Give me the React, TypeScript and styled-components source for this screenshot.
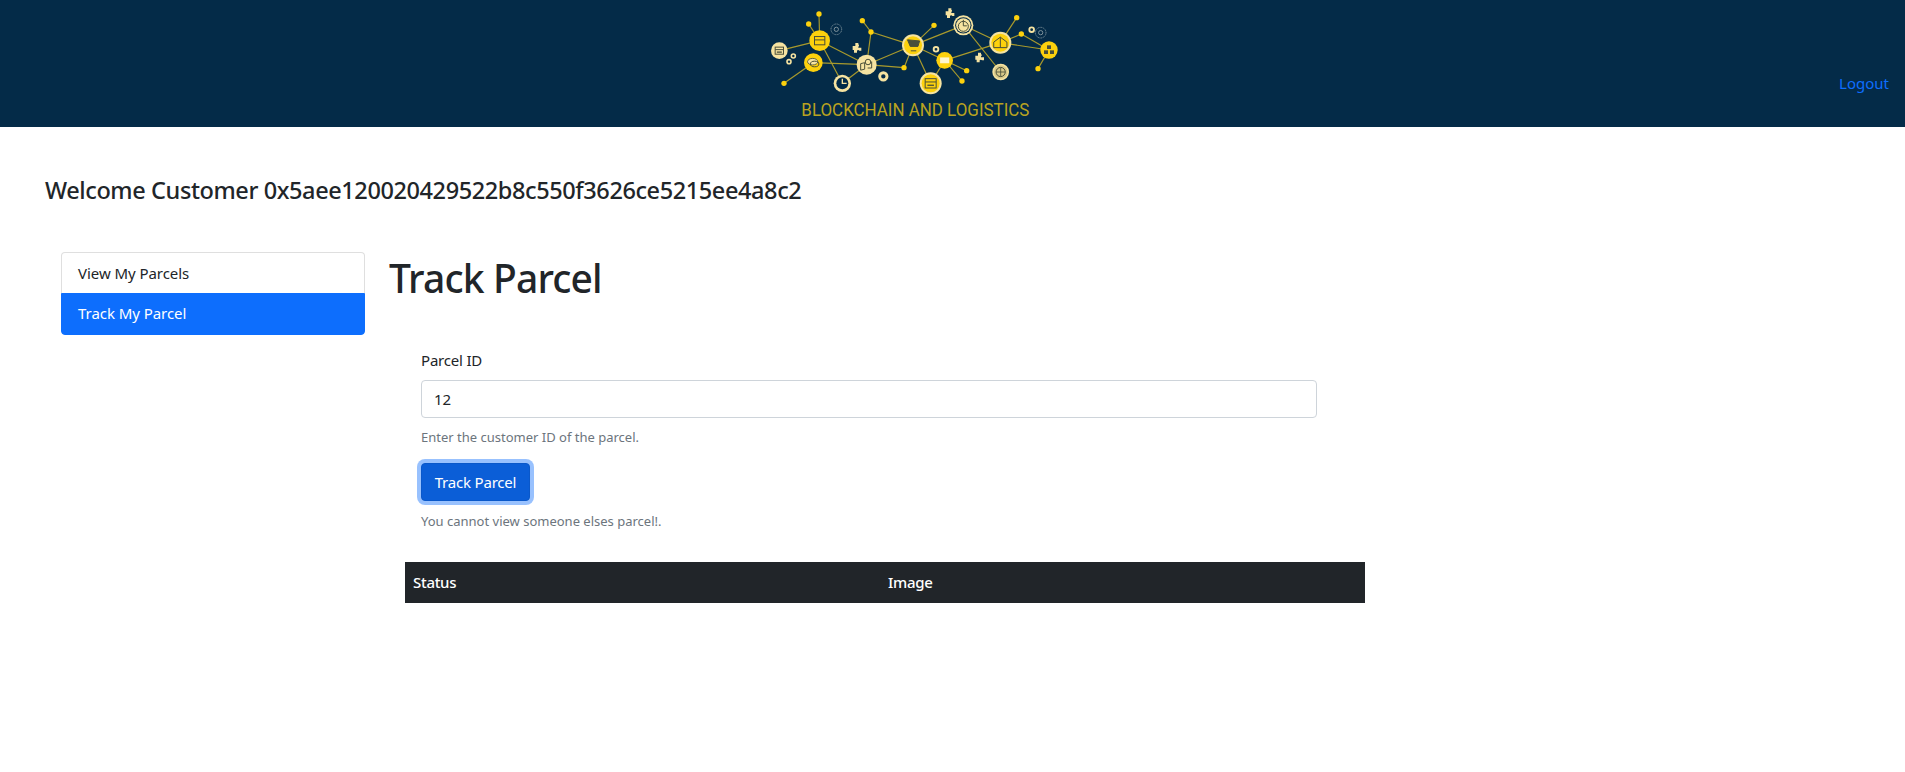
import React from "react";
import styled, { createGlobalStyle } from "styled-components";

const FONT = `"Noto Sans", "Open Sans", "Liberation Sans", sans-serif`;
const YELLOW = "#fdd10c";
const CREAM = "#f6e3a1";
const INK = "#4a4f3a";

const GlobalStyle = createGlobalStyle`
  html, body {
    margin: 0;
    padding: 0;
    background: #fff;
    color: #212529;
    font-family: ${FONT};
    font-size: 16px;
  }
  * { box-sizing: border-box; }
`;

const Header = styled.header`
  height: 127px;
  background: #042b48;
  display: flex;
  align-items: flex-end;
`;
const LogoWrap = styled.div`
  flex: 1;
  height: 127px;
  display: flex;
  justify-content: center;
  padding-right: 13px;
`;
const LogoutLink = styled.a`
  color: #0d6efd;
  font-size: 15px;
  line-height: 24px;
  padding: 8px 16px 32px 8px;
  text-decoration: none;
`;
const Welcome = styled.h4`
  margin: 0;
  padding: 46px 0 0 45px;
  height: 125px;
  font-size: 23.5px;
  line-height: 34px;
  font-weight: 500;
  letter-spacing: -0.4px;
`;
const Columns = styled.div`
  display: flex;
  align-items: flex-start;
  gap: 24px;
  padding-left: 61px;
`;
const SideList = styled.div`
  width: 304px;
  display: flex;
  flex-direction: column;
`;
const SideItem = styled.a<{ $active?: boolean }>`
  height: ${(p) => (p.$active ? "42px" : "41px")};
  padding-left: 16px;
  font-size: 15px;
  letter-spacing: -0.05px;
  line-height: ${(p) => (p.$active ? "38px" : "41px")};
  color: ${(p) => (p.$active ? "#fff" : "#212529")};
  background: ${(p) => (p.$active ? "#0d6efd" : "#fff")};
  border: 1px solid ${(p) => (p.$active ? "#0d6efd" : "#dfdfdf")};
  border-bottom: ${(p) => (p.$active ? "1px solid #0d6efd" : "0")};
  border-radius: ${(p) => (p.$active ? "0 0 4px 4px" : "4px 4px 0 0")};
`;
const MainCol = styled.main`
  width: 976px;
`;
const Title = styled.h1`
  margin: 0;
  height: 96px;
  font-size: 39px;
  line-height: 52px;
  font-weight: 500;
  letter-spacing: -0.85px;
`;
const Form = styled.form`
  margin-left: 32px;
  width: 896px;
  display: flex;
  flex-direction: column;
  align-items: flex-start;
`;
const Label = styled.label`
  font-size: 15px;
  line-height: 24px;
  letter-spacing: -0.2px;
  margin-bottom: 8px;
`;
const Input = styled.input`
  width: 100%;
  height: 38px;
  border: 1px solid #ced4da;
  border-radius: 4px;
  padding: 0 12px;
  font-family: ${FONT};
  font-size: 15px;
  color: #212529;
  outline: none;
`;
const Hint = styled.small<{ $gap: number }>`
  color: #6c757d;
  font-size: 13px;
  line-height: 21px;
  margin-top: ${(p) => p.$gap}px;
`;
const Button = styled.button`
  width: 109px;
  height: 38px;
  margin-top: 15px;
  border: 1px solid #0a58ca;
  border-radius: 4px;
  background: #0b5ed7;
  color: #fff;
  font-family: ${FONT};
  font-size: 15px;
  letter-spacing: -0.2px;
  padding: 0;
  box-shadow: 0 0 0 4px rgba(49, 132, 253, 0.5);
`;
const Table = styled.table`
  width: 960px;
  margin: 30px 0 0 16px;
  border-collapse: collapse;
  table-layout: fixed;
`;
const HeadCell = styled.th<{ $width?: number }>`
  height: 41px;
  width: ${(p) => (p.$width ? `${p.$width}px` : "auto")};
  padding: 0 8px 2px;
  background: #212529;
  color: #fff;
  text-align: left;
  font-size: 15px;
  font-weight: 500;
  letter-spacing: -0.3px;
`;

const dots = [
  [240, 42], [209, 72], [135, 250], [370, 62], [396, 96], [495, 203], [585, 76],
  [683, 212], [669, 243], [833, 53], [847, 102], [897, 206],
];
const edges = [
  [121, 152, 242, 122], [240, 42, 242, 122], [209, 72, 242, 122], [242, 122, 383, 194], [242, 122, 310, 250],
  [135, 250, 223, 188], [223, 188, 383, 194], [310, 250, 383, 194], [383, 194, 495, 203], [383, 194, 396, 96],
  [370, 62, 396, 96], [396, 96, 522, 136], [383, 194, 522, 136], [495, 203, 522, 136], [522, 136, 585, 76],
  [522, 136, 673, 76], [522, 136, 575, 250], [522, 136, 617, 181], [617, 181, 575, 250], [617, 181, 683, 212],
  [617, 181, 669, 243], [617, 181, 784, 128], [673, 76, 784, 128], [673, 76, 785, 216], [784, 128, 833, 53],
  [784, 128, 847, 102], [847, 102, 930, 150], [784, 128, 930, 150], [930, 150, 897, 206],
];

type Hub = { x: number; y: number; r: number; ring: string; core: string; icon: string };
const hubs: Hub[] = [
  { x: 121, y: 152, r: 25, ring: CREAM, core: CREAM, icon: "monitor" },
  { x: 242, y: 122, r: 31, ring: YELLOW, core: YELLOW, icon: "box" },
  { x: 223, y: 188, r: 28, ring: YELLOW, core: YELLOW, icon: "chat" },
  { x: 383, y: 194, r: 30, ring: CREAM, core: CREAM, icon: "map" },
  { x: 522, y: 136, r: 33, ring: CREAM, core: YELLOW, icon: "cart" },
  { x: 673, y: 76, r: 30, ring: CREAM, core: "#042b48", icon: "clock" },
  { x: 617, y: 181, r: 25, ring: YELLOW, core: YELLOW, icon: "mail" },
  { x: 575, y: 250, r: 33, ring: CREAM, core: YELLOW, icon: "calendar" },
  { x: 784, y: 128, r: 33, ring: CREAM, core: YELLOW, icon: "store" },
  { x: 930, y: 150, r: 26, ring: YELLOW, core: YELLOW, icon: "cubes" },
  { x: 785, y: 216, r: 25, ring: CREAM, core: "#d8c98a", icon: "globe" },
];
const rings = [[292, 88, 16], [905, 98, 16]];
const gears = [[163, 168, 6], [150, 185, 6], [433, 229, 11], [591, 148, 7], [878, 89, 7]];
const puzzles = [[354, 141], [633, 37], [722, 170]];

function HubIcon({ hub }: { hub: Hub }) {
  const { x, y, r, icon } = hub;
  const s = r * 0.5;
  const line = { fill: "none", stroke: INK, strokeWidth: 3 };
  switch (icon) {
    case "mail":
      return <rect x={x - s * 1.1} y={y - s * 0.7} width={s * 2.2} height={s * 1.4} fill="#fff6cf" />;
    case "clock":
      return (
        <g>
          <circle cx={x} cy={y} r={r * 0.72} fill={CREAM} />
          <circle cx={x} cy={y + 3} r={s} {...line} />
          <path d={`M${x} ${y - s * 1.1}v${s * 1.2}h${s * 0.7}`} {...line} />
        </g>
      );
    case "chat":
      return (
        <g>
          <ellipse cx={x - 2} cy={y - 3} rx={s * 1.1} ry={s * 0.7} fill={CREAM} stroke={INK} strokeWidth={2.5} />
          <ellipse cx={x + 4} cy={y + 4} rx={s * 0.9} ry={s * 0.6} {...line} />
        </g>
      );
    case "map":
      return (
        <g>
          <path d={`M${x - s * 1.2} ${y - 3}l${s * 0.8} -3v${s * 1.3}l-${s * 0.8} 3zM${x + 3} ${y + 10}h${s * 0.8}v-${s * 1.3}`} {...line} />
          <circle cx={x + 4} cy={y - 8} r={s * 0.55} {...line} />
        </g>
      );
    case "cart":
      return (
        <path
          d={`M${x - s} ${y - s}l${s * 0.5} ${s * 1.2}h${s * 1.4}l${s * 0.3} -${s}zM${x - s * 0.4} ${y + s}h${s}`}
          fill={INK}
          stroke={INK}
          strokeWidth={3}
        />
      );
    case "calendar":
    case "monitor":
      return (
        <g>
          <rect x={x - s} y={y - s * 0.85} width={s * 2} height={s * 1.7} {...line} />
          <line x1={x - s} y1={y - s * 0.25} x2={x + s} y2={y - s * 0.25} stroke={INK} strokeWidth={3} />
          <line x1={x - s * 0.6} y1={y + s * 0.35} x2={x + s * 0.6} y2={y + s * 0.35} stroke={INK} strokeWidth={4} />
        </g>
      );
    case "store":
      return (
        <g>
          <path d={`M${x - s * 1.2} ${y - s * 0.1}L${x} ${y - s}L${x + s * 1.2} ${y - s * 0.1}v${s}h-${s * 2.4}z`} {...line} />
          <line x1={x} y1={y - s} x2={x} y2={y + s * 0.9} stroke={INK} strokeWidth={3} />
        </g>
      );
    case "cubes":
      return (
        <g fill={INK}>
          <rect x={x - 6} y={y - 14} width={12} height={11} />
          <rect x={x - 15} y={y + 1} width={12} height={11} />
          <rect x={x + 3} y={y + 1} width={12} height={11} />
        </g>
      );
    case "globe":
      return (
        <g>
          <circle cx={x} cy={y} r={s * 1.1} {...line} />
          <line x1={x - s} y1={y} x2={x + s} y2={y} stroke={INK} strokeWidth={2.5} />
          <line x1={x} y1={y - s} x2={x} y2={y + s} stroke={INK} strokeWidth={2.5} />
        </g>
      );
    default:
      return (
        <g>
          <rect x={x - s} y={y - s * 0.8} width={s * 2} height={s * 1.6} {...line} />
          <line x1={x - s} y1={y - s * 0.15} x2={x + s} y2={y - s * 0.15} stroke={INK} strokeWidth={3} />
        </g>
      );
  }
}

function Logo() {
  return (
    <svg width={340} height={127} viewBox="0 0 1020 381" role="img">
      <defs>
        <filter id="soft">
          <feGaussianBlur stdDeviation="1.2" />
        </filter>
      </defs>
      <g filter="url(#soft)">
        {edges.map(([x1, y1, x2, y2], i) => (
          <line key={i} x1={x1} y1={y1} x2={x2} y2={y2} stroke="#a99a2c" strokeWidth={3.5} />
        ))}
        {dots.map(([cx, cy], i) => (
          <circle key={i} cx={cx} cy={cy} r={8} fill={YELLOW} />
        ))}
        {rings.map(([cx, cy, r], i) => (
          <g key={i} fill="none" stroke="#7d919a">
            <circle cx={cx} cy={cy} r={r} strokeWidth={3} strokeDasharray="3 2" />
            <circle cx={cx} cy={cy} r={r / 2.5} strokeWidth={3} />
          </g>
        ))}
        {gears.map(([cx, cy, r], i) => (
          <circle key={i} cx={cx} cy={cy} r={r} fill="none" stroke={CREAM} strokeWidth={r * 0.8} />
        ))}
        {puzzles.map(([cx, cy], i) => (
          <path
            key={i}
            d={`M${cx - 13} ${cy - 3}h8v-9h9v4a4 4 0 0 1 0 7v3h9v9h-6a4 4 0 0 0-7 0v6h-9v-8h-4z`}
            fill={CREAM}
          />
        ))}
        {hubs.map((hub, i) => (
          <g key={i}>
            <circle cx={hub.x} cy={hub.y} r={hub.r} fill={hub.ring} />
            <circle cx={hub.x} cy={hub.y} r={hub.r * 0.82} fill={hub.core} />
            <HubIcon hub={hub} />
          </g>
        ))}
        <circle cx={310} cy={250} r={26} fill={CREAM} />
        <circle cx={310} cy={250} r={18} fill="#042b48" />
        <path d="M310 236v14h13" fill="none" stroke={CREAM} strokeWidth={4} />
      </g>
      <text
        x={187}
        y={347}
        textLength={684}
        lengthAdjust="spacingAndGlyphs"
        fontFamily={`"Roboto", "Liberation Sans", sans-serif`}
        fontSize={54}
        fontWeight={400}
        fill="#b9a31f"
      >
        BLOCKCHAIN AND LOGISTICS
      </text>
    </svg>
  );
}

export default function App() {
  return (
    <>
      <GlobalStyle />
      <Header>
        <LogoWrap>
          <Logo />
        </LogoWrap>
        <LogoutLink href="#">Logout</LogoutLink>
      </Header>
      <Welcome>Welcome Customer 0x5aee120020429522b8c550f3626ce5215ee4a8c2</Welcome>
      <Columns>
        <SideList>
          <SideItem>View My Parcels</SideItem>
          <SideItem $active>Track My Parcel</SideItem>
        </SideList>
        <MainCol>
          <Title>Track Parcel</Title>
          <Form onSubmit={(e) => e.preventDefault()}>
            <Label>Parcel ID</Label>
            <Input defaultValue="12" />
            <Hint $gap={9}>Enter the customer ID of the parcel.</Hint>
            <Button type="button">Track Parcel</Button>
            <Hint $gap={10}>You cannot view someone elses parcel!.</Hint>
          </Form>
          <Table>
            <thead>
              <tr>
                <HeadCell $width={475}>Status</HeadCell>
                <HeadCell>Image</HeadCell>
              </tr>
            </thead>
          </Table>
        </MainCol>
      </Columns>
    </>
  );
}
